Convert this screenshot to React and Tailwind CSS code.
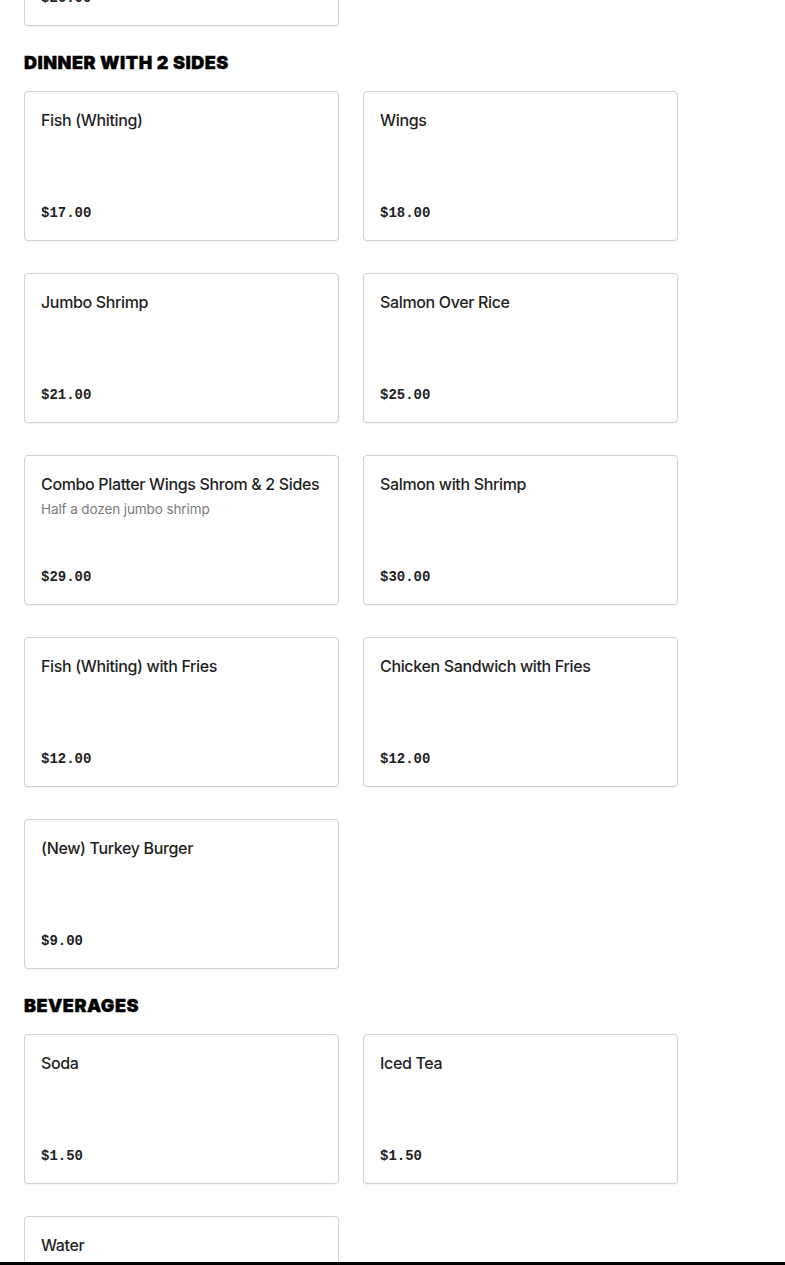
import React from 'react';

const sections = [
    {
        title: 'Dinner with 2 Sides',
        items: [
            { name: 'Fish (Whiting)', price: '$17.00' },
            { name: 'Wings', price: '$18.00' },
            { name: 'Jumbo Shrimp', price: '$21.00' },
            { name: 'Salmon Over Rice', price: '$25.00' },
            { name: 'Combo Platter Wings Shrom & 2 Sides', desc: 'Half a dozen jumbo shrimp', price: '$29.00' },
            { name: 'Salmon with Shrimp', price: '$30.00' },
            { name: 'Fish (Whiting) with Fries', price: '$12.00' },
            { name: 'Chicken Sandwich with Fries', price: '$12.00' },
            { name: '(New) Turkey Burger', price: '$9.00' },
        ],
    },
    {
        title: 'Beverages',
        items: [
            { name: 'Soda', price: '$1.50' },
            { name: 'Iced Tea', price: '$1.50' },
            { name: 'Water', price: '$1.00' },
        ],
    },
];

const ItemCard = ({ item, className = '' }) => (
    <div className={`h-[150px] bg-white border border-[#d2d2d2] rounded-[4px] shadow-[0_1px_2px_rgba(0,0,0,0.06)] px-4 pt-4 pb-[15px] flex flex-col ${className}`}>
        <h3 className="text-[16px] leading-6 font-medium text-[#1f1f1f] font-['Inter',sans-serif] tracking-[-0.35px] whitespace-nowrap">{item.name}</h3>
        {item.desc && (
            <p className="text-[13.5px] leading-5 mt-[3px] text-[#7a7a7a] font-['Inter',sans-serif] tracking-[-0.1px]">{item.desc}</p>
        )}
        <p className="mt-auto text-[14px] leading-6 font-bold text-[#222] font-['Liberation_Mono',monospace]">{item.price}</p>
    </div>
);

export default function App() {
    return (
        <div className="min-h-screen bg-white overflow-hidden">
            <div className="px-6 w-[702px]">
                <div className="grid grid-cols-2 gap-x-6">
                    <ItemCard item={{ name: 'Extra Platter', price: '$26.00' }} className="-mt-[124px]" />
                </div>
                {sections.map((section) => (
                    <section key={section.title}>
                        <h2 className="pt-[25px] mb-4 text-[18px] leading-6 font-black uppercase tracking-[0.5px] text-black font-['Inter',sans-serif] [-webkit-text-stroke:0.4px_black]">
                            {section.title}
                        </h2>
                        <div className="grid grid-cols-2 gap-x-6 gap-y-8">
                            {section.items.map((item) => (
                                <ItemCard key={item.name} item={item} />
                            ))}
                        </div>
                    </section>
                ))}
            </div>
            <div className="fixed bottom-0 left-0 right-0 h-[3px] bg-black" />
        </div>
    );
}
